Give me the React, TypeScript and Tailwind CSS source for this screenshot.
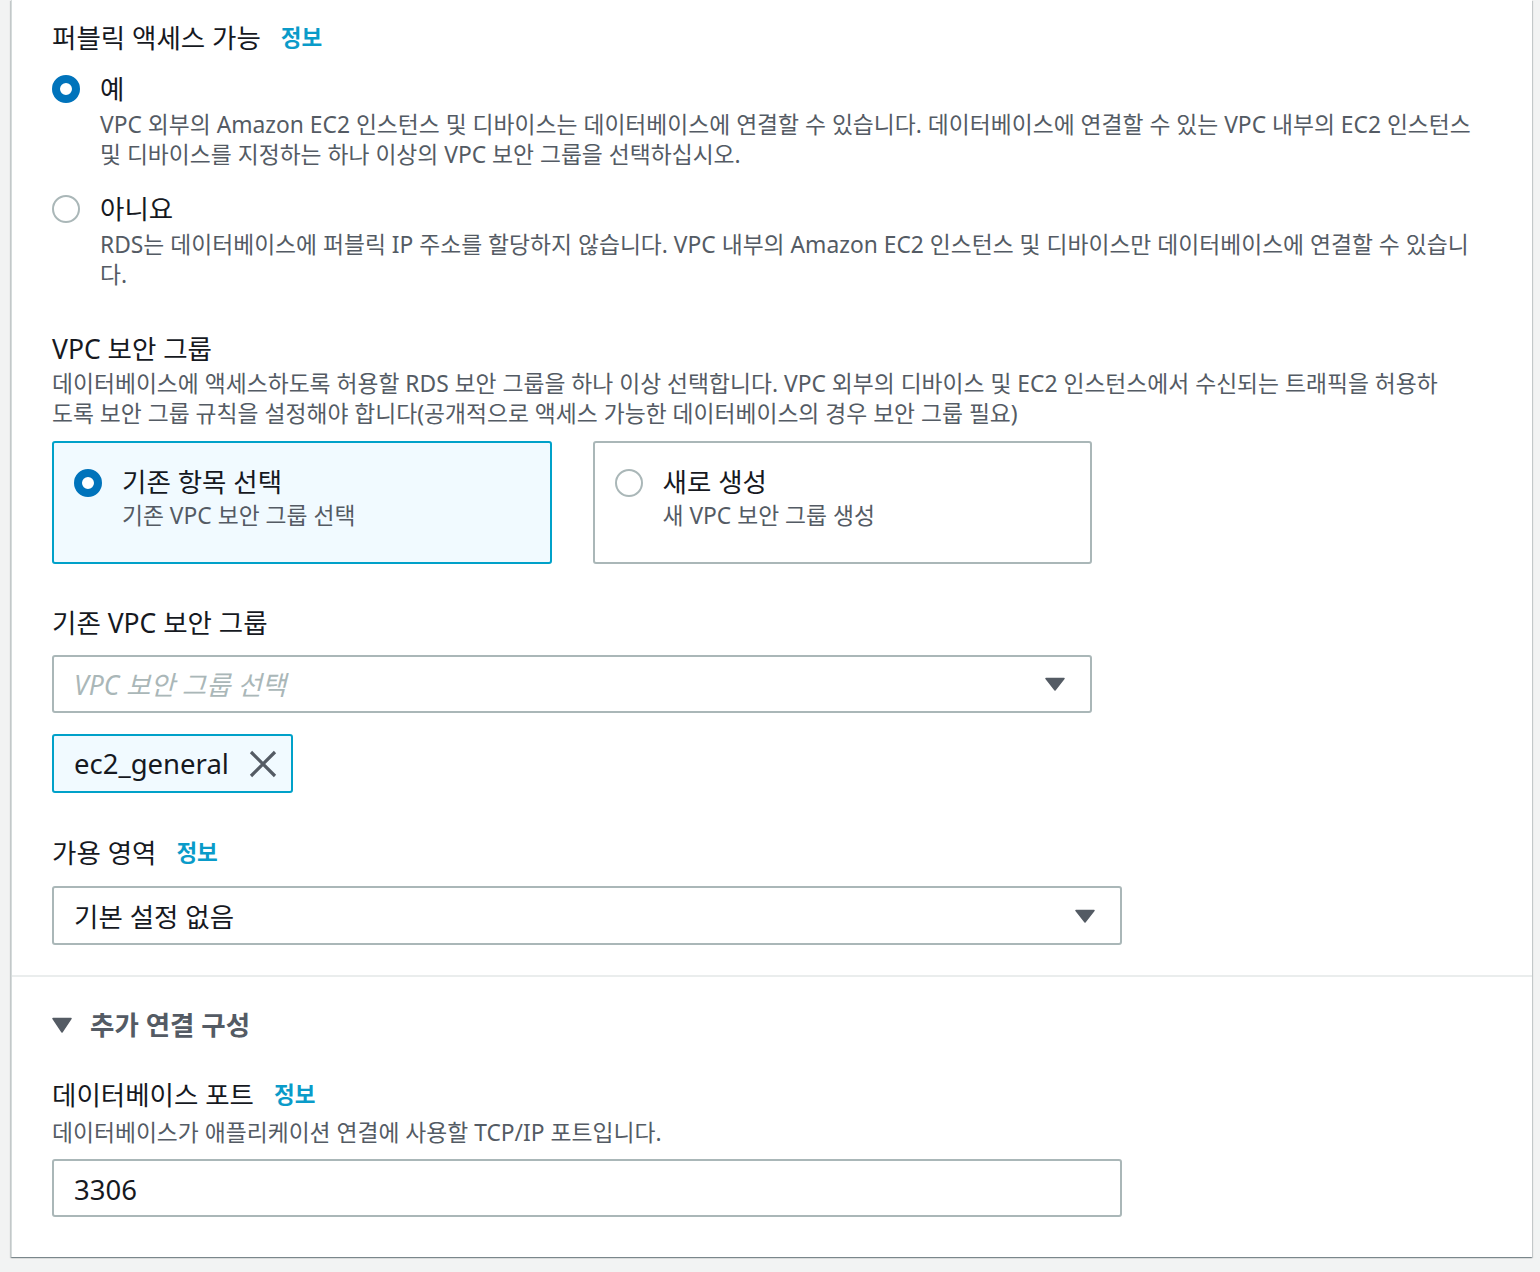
import React from 'react'

const font = "font-['Noto_Sans','Noto_Sans_CJK_KR',sans-serif]"

const Info: React.FC = () => (
  <span className="ml-5 text-[22.5px] font-bold text-[#0a9bc9] leading-8">정보</span>
)

const Radio: React.FC<{ checked?: boolean }> = ({ checked }) =>
  checked ? (
    <span className="block w-7 h-7 shrink-0 rounded-full border-[8px] border-[#0073bb] bg-white" />
  ) : (
    <span className="block w-7 h-7 shrink-0 rounded-full border-2 border-[#aab7b8] bg-white" />
  )

const Caret: React.FC = () => (
  <svg width="20" height="14" viewBox="0 0 20 14" className="shrink-0 -mt-1">
    <path d="M1 1.5 H19 L10 13 Z" fill="#545b64" stroke="#545b64" strokeWidth="1.5" strokeLinejoin="round" />
  </svg>
)

const App: React.FC = () => {
  const options = [
    {
      label: '예',
      checked: true,
      lines: [
        'VPC 외부의 Amazon EC2 인스턴스 및 디바이스는 데이터베이스에 연결할 수 있습니다. 데이터베이스에 연결할 수 있는 VPC 내부의 EC2 인스턴스',
        '및 디바이스를 지정하는 하나 이상의 VPC 보안 그룹을 선택하십시오.',
      ],
    },
    {
      label: '아니요',
      checked: false,
      lines: [
        'RDS는 데이터베이스에 퍼블릭 IP 주소를 할당하지 않습니다. VPC 내부의 Amazon EC2 인스턴스 및 디바이스만 데이터베이스에 연결할 수 있습니',
        '다.',
      ],
    },
  ]

  const tiles = [
    { title: '기존 항목 선택', sub: '기존 VPC 보안 그룹 선택', checked: true },
    { title: '새로 생성', sub: '새 VPC 보안 그룹 생성', checked: false },
  ]

  return (
    <div className={`${font} min-h-screen bg-[#f2f3f3] pl-[11px] pr-[8px] pb-[14px]`}>
      <div className="bg-white border-l border-[#d5dbdb] shadow-[0_1px_1px_0_rgba(0,28,36,0.3),1px_1px_1px_0_rgba(0,28,36,0.15),-1px_1px_1px_0_rgba(0,28,36,0.15)]">
        <div className="px-10 pt-[22px] pb-[30px]">
          <div className="flex items-center text-[26.5px] leading-8 text-[#16191f]">
            퍼블릭 액세스 가능
            <Info />
          </div>

          <div className="mt-[19px] flex flex-col">
            {options.map((o, i) => (
              <div key={i} className={i > 0 ? 'mt-[23px]' : ''}>
                <div className="flex items-center gap-5">
                  <Radio checked={o.checked} />
                  <span className="text-[26.5px] leading-8 text-[#16191f]">{o.label}</span>
                </div>
                <p className="ml-12 mt-[5px] text-[22.8px] leading-[30px] text-[#545b64] whitespace-nowrap">
                  {o.lines.map((l, j) => (
                    <span key={j} className="block">{l}</span>
                  ))}
                </p>
              </div>
            ))}
          </div>

          <div className="mt-[43px] text-[26.5px] leading-8 text-[#16191f]">VPC 보안 그룹</div>
          <p className="mt-[4px] text-[22.8px] leading-[30px] text-[#545b64] whitespace-nowrap">
            <span className="block">
              데이터베이스에 액세스하도록 허용할 RDS 보안 그룹을 하나 이상 선택합니다. VPC 외부의 디바이스 및 EC2 인스턴스에서 수신되는 트래픽을 허용하
            </span>
            <span className="block">
              도록 보안 그룹 규칙을 설정해야 합니다(공개적으로 액세스 가능한 데이터베이스의 경우 보안 그룹 필요)
            </span>
          </p>

          <div className="mt-3 grid grid-cols-2 gap-[41px] w-[1040px]">
            {tiles.map((t, i) => (
              <div
                key={i}
                className={
                  t.checked
                    ? 'h-[123px] rounded-[3px] border-2 border-[#00a1c9] bg-[#f1faff] px-5 pt-[25px] flex gap-5'
                    : 'h-[123px] rounded-[3px] border-2 border-[#aab7b8] bg-white px-5 pt-[25px] flex gap-5'
                }
              >
                <div className="pt-[1px]">
                  <Radio checked={t.checked} />
                </div>
                <div className="-mt-[2px]">
                  <div className="text-[26.5px] leading-8 text-[#16191f]">{t.title}</div>
                  <div className="mt-[3px] text-[22.8px] leading-[30px] text-[#545b64]">{t.sub}</div>
                </div>
              </div>
            ))}
          </div>

          <div className="mt-[43px] text-[26.5px] leading-8 text-[#16191f]">기존 VPC 보안 그룹</div>
          <div className="mt-4 w-[1040px] h-[58px] rounded-[3px] border-2 border-[#aab7b8] pl-5 pr-[25px] pt-1 flex items-center justify-between">
            <span className="text-[26.5px] italic text-[#aab7b8]">VPC 보안 그룹 선택</span>
            <Caret />
          </div>

          <div className="mt-[21px] inline-flex h-[59px] items-center gap-[20px] rounded-[3px] border-2 border-[#00a1c9] bg-[#f1faff] pl-5 pr-[14px]">
            <span className="text-[27.5px] text-[#16191f]">ec2_general</span>
            <svg width="28" height="28" viewBox="0 0 28 28">
              <path d="M2 2 L26 26 M26 2 L2 26" stroke="#545b64" strokeWidth="3.2" fill="none" />
            </svg>
          </div>

          <div className="mt-[44px] flex items-center text-[26.5px] leading-8 text-[#16191f]">
            가용 영역
            <Info />
          </div>
          <div className="mt-[17px] w-[1070px] h-[59px] rounded-[3px] border-2 border-[#aab7b8] pl-5 pr-[25px] pt-1 flex items-center justify-between">
            <span className="text-[26.5px] text-[#16191f]">기본 설정 없음</span>
            <Caret />
          </div>
        </div>

        <div className="border-t-2 border-[#eaeded] px-10 pt-[32px] pb-[40px]">
          <div className="flex items-center gap-[18px]">
            <svg width="20" height="16" viewBox="0 0 20 16">
              <path d="M1 1.5 H19 L10 15 Z" fill="#545b64" stroke="#545b64" strokeWidth="1.5" strokeLinejoin="round" />
            </svg>
            <span className="text-[26.5px] leading-8 font-bold text-[#545b64]">추가 연결 구성</span>
          </div>

          <div className="mt-[38px] flex items-center text-[26.5px] leading-8 text-[#16191f]">
            데이터베이스 포트
            <Info />
          </div>
          <p className="mt-[7px] text-[22.8px] leading-[30px] text-[#545b64]">
            데이터베이스가 애플리케이션 연결에 사용할 TCP/IP 포트입니다.
          </p>
          <div className="mt-[11px] w-[1070px] h-[58px] rounded-[3px] border-2 border-[#aab7b8] pl-5 pt-1 flex items-center">
            <span className="text-[27.5px] text-[#16191f]">3306</span>
          </div>
        </div>
      </div>
    </div>
  )
}

export default App
